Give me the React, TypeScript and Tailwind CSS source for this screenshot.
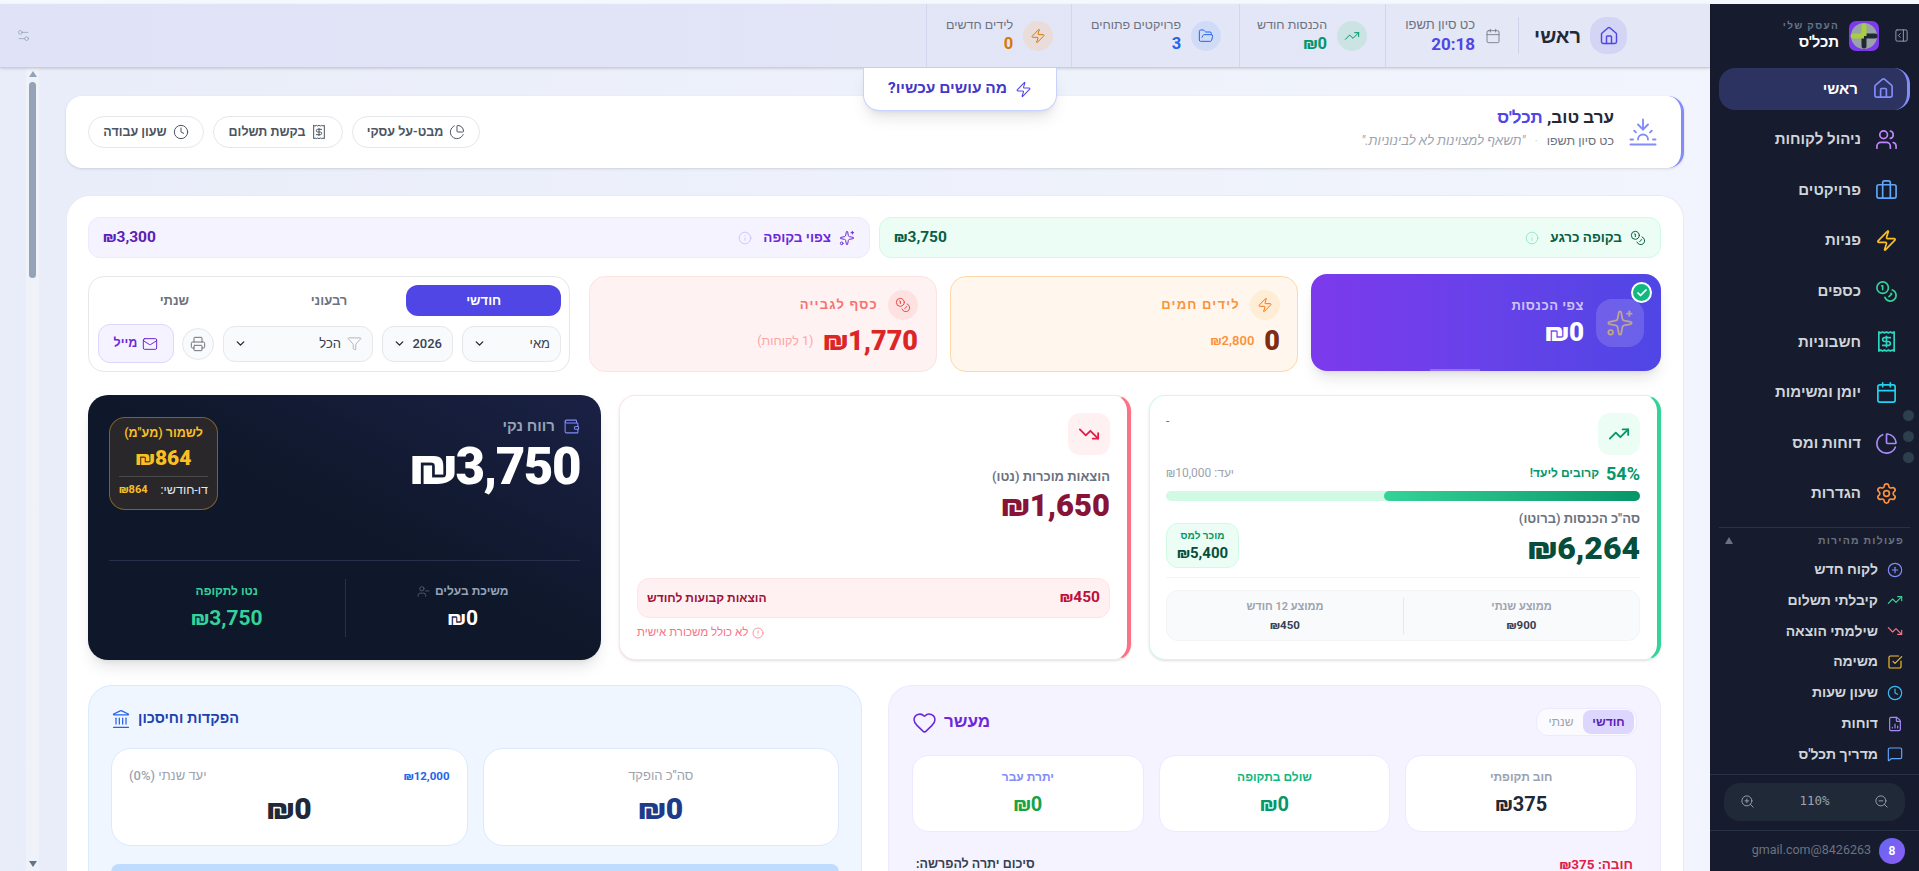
import {
  Briefcase, Calendar, ChartPie, Check, ChevronDown, CircleAlert, CirclePlus, Clock, Coins, FileChartColumn, Filter,
  FolderOpen, Heart, House, Info, Landmark, Mail, MessageSquare, PanelRightOpen, Printer, Receipt, Settings, Settings2,
  Sparkles, SquareCheckBig, Sunset, TrendingDown, TrendingUp, UserMinus, Users, Wallet, Zap, ZoomIn, ZoomOut,
} from "lucide-react";

const navItems = [
  { label: "ראשי", icon: House, color: "text-[#818cf8]", active: true },
  { label: "ניהול לקוחות", icon: Users, color: "text-[#c084fc]" },
  { label: "פרויקטים", icon: Briefcase, color: "text-[#60a5fa]" },
  { label: "פניות", icon: Zap, color: "text-[#fbbf24]" },
  { label: "כספים", icon: Coins, color: "text-[#34d399]" },
  { label: "חשבוניות", icon: Receipt, color: "text-[#2dd4bf]" },
  { label: "יומן ומשימות", icon: Calendar, color: "text-[#22d3ee]" },
  { label: "דוחות ומס", icon: ChartPie, color: "text-[#a78bfa]" },
  { label: "הגדרות", icon: Settings, color: "text-[#fb923c]" },
];

const quickItems = [
  { label: "לקוח חדש", icon: CirclePlus, color: "text-[#818cf8]" },
  { label: "קיבלתי תשלום", icon: TrendingUp, color: "text-[#34d399]" },
  { label: "שילמתי הוצאה", icon: TrendingDown, color: "text-[#fb7185]" },
  { label: "משימה", icon: SquareCheckBig, color: "text-[#fbbf24]" },
  { label: "שעון שעות", icon: Clock, color: "text-[#38bdf8]" },
  { label: "דוחות", icon: FileChartColumn, color: "text-[#a78bfa]" },
  { label: "מדריך תכל'ס", icon: MessageSquare, color: "text-[#60a5fa]" },
];

function Logo() {
  return (
    <svg width="30" height="30" viewBox="0 0 30 30" aria-hidden>
      <rect width="30" height="30" rx="7" fill="#7c3aed" />
      <circle cx="15" cy="15" r="13" fill="#9aa3a8" />
      <path d="M15 12.5h11a2.5 2.5 0 0 1 0 5H15z" fill="#1f2a30" />
      <path d="M12.5 15h5v10a2.5 2.5 0 0 1-5 0z" fill="#1f2a30" />
      <path d="M15 17.5H4a2.5 2.5 0 0 1 0-5h11z" fill="#a9cf3c" />
      <path d="M17.5 15h-5V5a2.5 2.5 0 0 1 5 0z" fill="#a9cf3c" />
    </svg>
  );
}

function Sidebar() {
  return (
    <aside className="relative flex w-[209px] shrink-0 flex-col bg-[#161c2d]">
      <div className="flex h-[65px] items-center pr-[10px] pl-[12px]">
        <PanelRightOpen size={15} strokeWidth={1.5} className="ml-[15px] text-[#94a3b8]" />
        <Logo />
        <div className="mr-[10px] leading-none">
          <div className="text-[10px] font-semibold tracking-[1.3px] text-[#64748b]">העסק שלי</div>
          <div className="mt-[4px] text-[15px] font-extrabold text-white">תכל'ס</div>
        </div>
      </div>
      <nav className="flex flex-col gap-[8.6px] px-[9px]">
        {navItems.map((n) => (
          <div
            key={n.label}
            className={`flex h-[42px] items-center gap-[14px] rounded-2xl pr-[12px] text-[15px] ${
              n.active
                ? "border-r-[3px] border-[#818cf8] bg-[#2d3360] pr-[10px] font-bold text-white"
                : "font-semibold text-[#d1d5db]"
            }`}
          >
            <n.icon size={23} strokeWidth={1.75} className={n.color} />
            <span>{n.label}</span>
          </div>
        ))}
      </nav>
      <div className="mx-[9px] mt-[12px] border-t border-[#2a3345]" />
      <div className="flex h-[27px] items-center justify-between px-[15px] text-[10.5px] font-bold tracking-[1.2px] text-[#6b7280]">
        <span>פעולות מהירות</span>
        <span className="h-0 w-0 border-r-[4.5px] border-b-[7px] border-l-[4.5px] border-r-transparent border-b-[#6b7280] border-l-transparent" />
      </div>
      <div className="flex flex-col">
        {quickItems.map((q) => (
          <div key={q.label} className="flex h-[30.8px] items-center gap-[9px] pr-[16px] text-[14px] font-semibold text-[#d1d5db]">
            <q.icon size={16} strokeWidth={1.75} className={q.color} />
            <span>{q.label}</span>
          </div>
        ))}
      </div>
      <div className="mt-[4px] border-t border-[#2a3345] px-[14px] pt-[8px] pb-[9px]">
        <div className="flex h-[38px] items-center justify-between rounded-2xl bg-[#1f2937] px-[16px] text-[#9ca3af]">
          <ZoomOut size={15} strokeWidth={1.5} />
          <span className="font-['DejaVu_Sans_Mono',monospace] text-[12.5px]">110%</span>
          <ZoomIn size={15} strokeWidth={1.5} />
        </div>
      </div>
      <div className="flex h-[42px] items-center gap-[8px] border-t border-[#2a3345] pr-[14px]">
        <span className="flex size-[26px] items-center justify-center rounded-full bg-gradient-to-br from-[#6366f1] to-[#8b5cf6] text-[12px] font-bold text-white">
          8
        </span>
        <span className="text-[12.5px] text-[#6b7280]">8426263@gmail.com</span>
      </div>
      <div className="absolute top-[406px] left-[193px] flex flex-col gap-[10px]">
        <span className="size-[11px] rounded-full bg-[#2d3f4d]" />
        <span className="size-[11px] rounded-full bg-[#2d3f4d]" />
        <span className="size-[11px] rounded-full bg-[#2d3f4d]" />
      </div>
    </aside>
  );
}

function HeaderStat({ label, value, icon: Icon, circle, color, width }: { label: string; value: string; icon: typeof Zap; circle: string; color: string; width: string }) {
  return (
    <div className={`flex h-full items-center gap-[10px] border-l border-[#d3d7ee] pr-[18px] ${width}`}>
      <span className={`flex size-[30px] items-center justify-center rounded-full ${circle}`}>
        <Icon size={16} strokeWidth={1.5} className={color} />
      </span>
      <div>
        <div className="text-[12.5px] leading-[16px] text-[#6b7280]">{label}</div>
        <div className={`text-[16.5px] leading-[22px] font-bold ${color}`}>{value}</div>
      </div>
    </div>
  );
}

function Header() {
  return (
    <header className="relative z-10 flex h-[64px] shrink-0 items-center border-b border-[#c9cdea] bg-gradient-to-l from-[#e4e8f6] to-[#e0e2f7] pr-[83px] shadow-sm">
      <span className="flex size-[37px] items-center justify-center rounded-2xl bg-[#d4d5f5]">
        <House size={20} strokeWidth={1.75} className="text-[#4f46e5]" />
      </span>
      <span className="mr-[9px] text-[20px] font-bold text-[#1f2937]">ראשי</span>
      <span className="mr-[15px] h-[37px] border-r border-[#cfd3ea]" />
      <div className="flex h-full w-[133px] items-center gap-[10px] border-l border-[#d3d7ee] pr-[17px]">
        <Calendar size={16} strokeWidth={1.25} className="text-[#6b7280]" />
        <div>
          <div className="text-[13px] leading-[16px] text-[#6b7280]">כט סיון תשפו</div>
          <div className="text-[17px] leading-[22px] font-bold text-[#4f46e5]">20:18</div>
        </div>
      </div>
      <HeaderStat label="הכנסות חודש" value="₪0" icon={TrendingUp} circle="bg-[#cce3e4]" color="text-[#059669]" width="w-[146px]" />
      <HeaderStat label="פרויקטים פתוחים" value="3" icon={FolderOpen} circle="bg-[#d0dcf7]" color="text-[#2563eb]" width="w-[168px]" />
      <HeaderStat label="לידים חדשים" value="0" icon={Zap} circle="bg-[#e9dcd9]" color="text-[#d97706]" width="w-[145px]" />
      <Settings2 size={15} strokeWidth={1.25} className="mr-auto ml-[16px] text-[#94a3b8]" />
      <button className="absolute top-[64px] left-[863px] flex h-[43px] w-[194px] items-center justify-center gap-[8px] rounded-b-2xl border border-t-0 border-[#c7d2fe] bg-white text-[15.5px] font-bold text-[#4338ca] shadow-lg">
        <Zap size={17} strokeWidth={1.5} className="text-[#4f46e5]" />
        מה עושים עכשיו?
      </button>
    </header>
  );
}

function Scrollbar() {
  return (
    <div className="ml-[26px] flex w-[13px] shrink-0 flex-col items-center self-stretch bg-[#f1f5f9]/70 pt-[3px]">
      <span className="h-0 w-0 border-r-[4px] border-b-[6px] border-l-[4px] border-r-transparent border-b-[#94a3b8] border-l-transparent" />
      <span className="mt-[5px] h-[196px] w-[7px] rounded-full bg-[#94a3b8]" />
      <span className="mt-auto mb-[4px] h-0 w-0 border-t-[6px] border-r-[4px] border-l-[4px] border-t-[#64748b] border-r-transparent border-l-transparent" />
    </div>
  );
}

function GreetingCard() {
  const buttons = [
    { label: "מבט-על עסקי", icon: ChartPie, w: "w-[128px]" },
    { label: "בקשת תשלום", icon: Receipt, w: "w-[130px]" },
    { label: "שעון עבודה", icon: Clock, w: "w-[116px]" },
  ];
  return (
    <section className="flex h-[72px] shrink-0 items-center justify-between rounded-2xl border-r-[3px] border-[#818cf8] bg-white pr-[23px] pl-[22px] shadow-sm">
      <div className="flex items-center gap-[14px]">
        <Sunset size={30} strokeWidth={1.5} className="text-[#818cf8]" />
        <div className="mb-[9px]">
          <div className="text-[17px] leading-[24px] font-extrabold text-[#1f2937]">
            ערב טוב, <span className="text-[#4f46e5]">תכל'ס</span>
          </div>
          <div className="mt-[3px] flex items-center gap-[9px] text-[12.5px] leading-[18px] text-[#6b7280]">
            <span>כט סיון תשפו</span>
            <span className="text-[#d1d5db]">·</span>
            <span className="text-[13px] text-[#9ca3af] italic">"תשאף למצוינות לא לבינוניות."</span>
          </div>
        </div>
      </div>
      <div className="flex gap-[9px]">
        {buttons.map((b) => (
          <button key={b.label} className={`flex h-[32px] items-center justify-center gap-[6px] rounded-full border border-[#e5e7eb] text-[12.5px] font-semibold text-[#4b5563] ${b.w}`}>
            <b.icon size={16} strokeWidth={1.5} />
            {b.label}
          </button>
        ))}
      </div>
    </section>
  );
}

function CashPills() {
  return (
    <div className="grid h-[41px] grid-cols-2 gap-[9px]">
      <div className="flex items-center justify-between rounded-xl border border-[#d1fae5] bg-[#ecfdf5] px-[14px]">
        <div className="flex items-center gap-[8px] text-[13.5px] font-bold text-[#065f46]">
          <Coins size={16} strokeWidth={1.5} />
          <span>בקופה כרגע</span>
          <Info size={14} strokeWidth={1.25} className="mr-[3px] text-[#6ee7b7]" />
        </div>
        <span className="text-[15.5px] font-bold text-[#065f46]">₪3,750</span>
      </div>
      <div className="flex items-center justify-between rounded-xl border border-[#ede9fe] bg-[#f5f3ff] px-[14px]">
        <div className="flex items-center gap-[8px] text-[13.5px] font-bold text-[#6d28d9]">
          <Sparkles size={16} strokeWidth={1.5} />
          <span>צפוי בקופה</span>
          <Info size={14} strokeWidth={1.25} className="mr-[3px] text-[#c4b5fd]" />
        </div>
        <span className="text-[15.5px] font-bold text-[#5b21b6]">₪3,300</span>
      </div>
    </div>
  );
}

function SelectBox({ className, children }: { className: string; children: React.ReactNode }) {
  return (
    <div className={`flex h-[36px] items-center justify-between rounded-xl border border-[#e5e7eb] bg-[#f9fafb] px-[10px] text-[13px] font-medium text-[#374151] ${className}`}>
      {children}
      <ChevronDown size={13} strokeWidth={2.5} className="text-[#1f2937]" />
    </div>
  );
}

function KpiRow() {
  return (
    <div className="mt-[16px] flex h-[98px] items-end gap-[13px]">
      <div className="relative flex h-[97px] w-[350px] shrink-0 items-center gap-[12px] self-start rounded-2xl bg-gradient-to-l from-[#4f46e5] to-[#7c3aed] pr-[17px] shadow-lg">
        <span className="absolute top-[8px] right-[9px] z-10 flex size-[21px] items-center justify-center rounded-full border-2 border-white bg-[#10b981]">
          <Check size={12} strokeWidth={3.5} className="text-white" />
        </span>
        <span className="flex size-[48px] items-center justify-center rounded-2xl bg-white/15">
          <Sparkles size={28} strokeWidth={1.5} className="text-[#bfa58f]" />
        </span>
        <div>
          <div className="text-[13px] font-bold tracking-[0.5px] text-white/70">צפי הכנסות</div>
          <div className="text-[26px] leading-[34px] font-black text-white">₪0</div>
        </div>
        <span className="absolute right-[181px] bottom-0 h-[2px] w-[50px] bg-white/25" />
      </div>
      <div className="flex h-[96px] w-[348px] shrink-0 flex-col rounded-2xl border border-[#fed7aa] bg-[#fff7ed] pt-[13px] pr-[17px]">
        <div className="flex items-center gap-[10px]">
          <span className="flex size-[30px] items-center justify-center rounded-full bg-[#ffedd5]">
            <Zap size={16} strokeWidth={1.5} className="text-[#f97316]" />
          </span>
          <span className="text-[13px] font-bold tracking-[1.2px] text-[#fb923c]">לידים חמים</span>
        </div>
        <div className="mt-[4px] flex items-center gap-[10px]">
          <span className="text-[27px] leading-[34px] font-black text-[#7c2d12]">0</span>
          <span className="text-[13px] font-semibold text-[#fb923c]">₪2,800</span>
        </div>
      </div>
      <div className="flex h-[96px] w-[348px] shrink-0 flex-col rounded-2xl border border-[#fee2e2] bg-[#fef2f2] pt-[13px] pr-[18px]">
        <div className="flex items-center gap-[10px]">
          <span className="flex size-[30px] items-center justify-center rounded-full bg-[#fee2e2]">
            <Coins size={16} strokeWidth={1.5} className="text-[#ef4444]" />
          </span>
          <span className="text-[13px] font-bold tracking-[1.2px] text-[#f87171]">כסף לגבייה</span>
        </div>
        <div className="mt-[4px] flex items-center gap-[10px]">
          <span className="text-[27px] leading-[34px] font-black text-[#dc2626]">₪1,770</span>
          <span className="text-[12.5px] text-[#fca5a5]">(1 לקוחות)</span>
        </div>
      </div>
      <div className="mr-[6px] flex h-[96px] w-[482px] shrink-0 flex-col rounded-2xl border border-[#e5e7eb] bg-white px-[8px] pt-[8px]">
        <div className="grid h-[31px] grid-cols-3 text-[13px] font-semibold text-[#6b7280]">
          <span className="flex items-center justify-center rounded-xl bg-[#4f46e5] font-bold text-white">חודשי</span>
          <span className="flex items-center justify-center">רבעוני</span>
          <span className="flex items-center justify-center">שנתי</span>
        </div>
        <div className="mt-[8px] flex items-center gap-[9px]">
          <SelectBox className="w-[99px]">מאי</SelectBox>
          <SelectBox className="w-[71px]">2026</SelectBox>
          <SelectBox className="w-[150px]">
            <span className="flex items-center gap-[6px]">
              <Filter size={15} strokeWidth={1.25} className="text-[#9ca3af]" />
              הכל
            </span>
          </SelectBox>
          <span className="flex h-[32px] w-[32px] items-center justify-center rounded-full border border-[#e5e7eb] bg-[#f9fafb]">
            <Printer size={16} strokeWidth={1.5} className="text-[#6b7280]" />
          </span>
          <span className="mr-[-1px] flex h-[39px] w-[76px] items-center justify-center gap-[5px] rounded-xl border border-[#ddd6fe] bg-[#f5f3ff] text-[12.5px] font-bold text-[#6d28d9]">
            <Mail size={16} strokeWidth={1.5} />
            מייל
          </span>
        </div>
      </div>
    </div>
  );
}

function IncomeCard() {
  return (
    <div className="flex h-[265px] w-[512px] shrink-0 flex-col rounded-2xl border border-r-4 border-[#d1fae5] border-r-[#34d399] bg-white pt-[17px] pr-[17px] pl-[16px] shadow-sm">
      <div className="flex items-start justify-between">
        <span className="flex size-[42px] items-center justify-center rounded-xl bg-[#ecfdf5]">
          <TrendingUp size={22} strokeWidth={2} className="text-[#059669]" />
        </span>
        <span className="text-[12px] leading-[16px] text-[#6b7280]">-</span>
      </div>
      <div className="mt-[5px] flex h-[26px] items-center justify-between">
        <div className="flex items-center gap-[7px]">
          <span className="text-[18px] font-bold text-[#059669]">54%</span>
          <span className="text-[12px] font-semibold text-[#059669]">קרובים ליעד!</span>
        </div>
        <span className="text-[12px] text-[#9ca3af]">יעד: ₪10,000</span>
      </div>
      <div className="mt-[5px] flex h-[10px] justify-start rounded-full bg-[#d1fae5]">
        <div className="h-full w-[54%] rounded-full bg-gradient-to-r from-[#34d399] to-[#059669]" />
      </div>
      <div className="mt-[9px] flex items-start justify-between">
        <div>
          <div className="text-[13px] leading-[18px] font-semibold text-[#6b7280]">סה"כ הכנסות (ברוטו)</div>
          <div className="mt-[1px] text-[32px] leading-[38px] font-black text-[#064e3b]">₪6,264</div>
        </div>
        <div className="mt-[13px] flex h-[45px] w-[73px] flex-col items-center justify-center rounded-xl border border-[#d1fae5] bg-[#ecfdf5]">
          <span className="text-[10px] leading-[14px] font-semibold text-[#059669]">מוכר למס</span>
          <span className="text-[15px] leading-[20px] font-bold text-[#064e3b]">₪5,400</span>
        </div>
      </div>
      <div className="mt-[9px] border-t border-[#f3f4f6]" />
      <div className="mt-[12px] grid h-[51px] grid-cols-2 rounded-xl border border-[#f3f4f6] bg-[#f9fafb] py-[7px]">
        <div className="flex flex-col items-center justify-center border-l border-[#e5e7eb]">
          <span className="text-[11px] leading-[18px] font-semibold text-[#9ca3af]">ממוצע שנתי</span>
          <span className="text-[11.5px] leading-[18px] font-bold text-[#374151]">₪900</span>
        </div>
        <div className="flex flex-col items-center justify-center">
          <span className="text-[11px] leading-[18px] font-semibold text-[#9ca3af]">ממוצע 12 חודש</span>
          <span className="text-[11.5px] leading-[18px] font-bold text-[#374151]">₪450</span>
        </div>
      </div>
    </div>
  );
}

function ExpenseCard() {
  return (
    <div className="flex h-[265px] w-[512px] shrink-0 flex-col rounded-2xl border border-r-4 border-[#ffe4e6] border-r-[#fb7185] bg-white px-[17px] pt-[17px] shadow-sm">
      <span className="flex size-[42px] items-center justify-center rounded-xl bg-[#fff1f2]">
        <TrendingDown size={22} strokeWidth={2} className="text-[#e11d48]" />
      </span>
      <div className="mt-[13px] text-[13px] leading-[18px] font-semibold text-[#6b7280]">הוצאות מוכרות (נטו)</div>
      <div className="mt-[1px] text-[31px] leading-[38px] font-black text-[#881337]">₪1,650</div>
      <div className="mt-auto flex h-[40px] items-center justify-between rounded-xl border border-[#ffe4e6] bg-[#fff1f2] px-[9px]">
        <span className="text-[15.5px] font-bold text-[#be123c]">₪450</span>
        <span className="text-[12px] font-semibold text-[#9f1239]">הוצאות קבועות לחודש</span>
      </div>
      <div className="mt-[7px] mb-[18px] flex h-[16px] items-center justify-end gap-[4px] text-[11.5px] font-medium text-[#fb7185]">
        <CircleAlert size={12} strokeWidth={1.5} />
        <span>לא כולל משכורת אישית</span>
      </div>
    </div>
  );
}

function ProfitCard() {
  return (
    <div className="flex h-[265px] w-[513px] shrink-0 flex-col rounded-[20px] bg-gradient-to-bl from-[#1a2145] via-[#0f172a] to-[#0f172a] px-[21px] shadow-lg">
      <div className="flex h-[166px] items-start justify-between border-b border-[#26304a]">
        <div className="pt-[21px]">
          <div className="flex items-center gap-[8px] text-[15px] leading-[20px] font-semibold text-[#94a3b8]">
            <Wallet size={17} strokeWidth={1.5} className="text-[#818cf8]" />
            רווח נקי
          </div>
          <div className="mt-[2px] text-[51px] leading-[58px] font-black tracking-[-1.5px] text-white">₪3,750</div>
        </div>
        <div className="mt-[22px] flex h-[93px] w-[109px] flex-col items-center rounded-2xl border border-[#fbbf24]/40 bg-[#29272a] px-[9px] pt-[7px]">
          <div className="text-[12.5px] leading-[16px] font-semibold text-[#fbbf24]">לשמור (מע"מ)</div>
          <div className="mt-[3px] text-[21px] leading-[28px] font-black text-[#fbbf24]">₪864</div>
          <div className="mt-[4px] flex w-full items-center justify-between border-t border-[#4a4a4a] pt-[5px] leading-[16px]">
            <span className="text-[12.5px] text-[#e5e7eb]">דו-חודשי:</span>
            <span className="text-[11px] font-bold text-[#fbbf24]">₪864</span>
          </div>
        </div>
      </div>
      <div className="mt-[18px] grid h-[58px] grid-cols-2">
        <div className="flex flex-col items-center border-l border-[#26304a]">
          <div className="flex items-center gap-[5px] text-[12px] leading-[24px] font-semibold text-[#94a3b8]">
            <span>משיכת בעלים</span>
            <UserMinus size={13} strokeWidth={1.25} className="text-[#6b7280]" />
          </div>
          <div className="text-[21px] leading-[30px] font-bold text-white">₪0</div>
        </div>
        <div className="flex flex-col items-center">
          <div className="text-[12px] leading-[24px] font-semibold text-[#34d399]">נטו לתקופה</div>
          <div className="text-[21px] leading-[30px] font-bold text-[#34d399]">₪3,750</div>
        </div>
      </div>
    </div>
  );
}

function TitheStat({ label, value, labelColor, valueColor }: { label: string; value: string; labelColor: string; valueColor: string }) {
  return (
    <div className="flex h-[77px] flex-col items-center justify-center gap-[5px] rounded-2xl border border-[#ede9fe] bg-white pb-[3px]">
      <span className={`text-[12px] leading-[18px] font-semibold ${labelColor}`}>{label}</span>
      <span className={`text-[20px] leading-[26px] font-bold ${valueColor}`}>{value}</span>
    </div>
  );
}

function TitheCard() {
  return (
    <div className="w-[773px] shrink-0 rounded-t-3xl border border-b-0 border-[#ede9fe] bg-[#f5f3ff] px-[23px] pt-[22px]">
      <div className="flex h-[28px] items-center justify-between">
        <div className="flex h-[28px] w-[101px] items-center rounded-xl border border-[#ede9fe] bg-white/60 px-[2px] text-[12px]">
          <span className="flex h-[24px] w-[51px] items-center justify-center rounded-lg bg-[#ddd6fe] font-bold text-[#5b21b6]">חודשי</span>
          <span className="flex-1 text-center text-[#9ca3af]">שנתי</span>
        </div>
        <div className="flex items-center gap-[7px] text-[17px] font-bold text-[#6d28d9]">
          <span>מעשר</span>
          <Heart size={25} strokeWidth={1.5} />
        </div>
      </div>
      <div className="mt-[19px] grid grid-cols-3 gap-[15px]">
        <TitheStat label="חוב תקופתי" value="₪375" labelColor="text-[#9ca3af]" valueColor="text-[#1f2937]" />
        <TitheStat label="שולם בתקופה" value="₪0" labelColor="text-[#10b981]" valueColor="text-[#059669]" />
        <TitheStat label="יתרת עבר" value="₪0" labelColor="text-[#818cf8]" valueColor="text-[#16a34a]" />
      </div>
      <div className="mt-[22px] flex items-center justify-between px-[4px]">
        <span className="text-[13.5px] font-bold text-[#e11d48]">חובה: ₪375</span>
        <span className="text-[12.5px] font-bold text-[#374151]">סיכום יתרה להפרשה:</span>
      </div>
    </div>
  );
}

function DepositStat({ children }: { children: React.ReactNode }) {
  return <div className="flex h-[98px] flex-col items-center rounded-[20px] border border-[#dbeafe] bg-white px-[17px] pt-[18px]">{children}</div>;
}

function DepositsCard() {
  return (
    <div className="w-[774px] shrink-0 rounded-t-3xl border border-b-0 border-[#dbeafe] bg-[#eff6ff] px-[22px] pt-[22px]">
      <div className="flex h-[21px] items-center justify-end gap-[7px] text-[14.5px] font-bold text-[#1e40af]">
        <span>הפקדות וחיסכון</span>
        <Landmark size={20} strokeWidth={1.5} className="text-[#2563eb]" />
      </div>
      <div className="mt-[19px] grid grid-cols-2 gap-[15px]">
        <DepositStat>
          <span className="text-[13px] leading-[18px] font-medium text-[#9ca3af]">סה"כ הופקד</span>
          <span className="mt-[5px] text-[30px] leading-[38px] font-black text-[#1e3a8a]">₪0</span>
        </DepositStat>
        <DepositStat>
          <div className="flex w-full items-center justify-between">
            <span className="text-[11.5px] leading-[18px] font-bold text-[#2563eb]">₪12,000</span>
            <span className="text-[13px] leading-[18px] font-medium text-[#9ca3af]">יעד שנתי (0%)</span>
          </div>
          <span className="mt-[5px] text-[30px] leading-[38px] font-black text-[#1f2937]">₪0</span>
        </DepositStat>
      </div>
      <div className="mt-[18px] h-[12px] rounded-t-lg bg-[#bfdbfe]" />
    </div>
  );
}

export default function App() {
  return (
    <div dir="rtl" className="flex h-screen overflow-hidden bg-[#f5f8fd] pt-[4px] font-[Roboto,'Noto_Sans',sans-serif]">
      <Sidebar />
      <div className="flex min-w-0 flex-1 flex-col">
        <Header />
        <div className="flex min-h-0 flex-1 flex-row-reverse overflow-hidden bg-gradient-to-l from-[#f2f5fd] to-[#e9edf9]">
          <Scrollbar />
          <main className="flex min-w-0 flex-1 flex-col pt-[28px] pr-[26px] pl-[27px]">
            <GreetingCard />
            <section className="mt-[27px] flex-1 rounded-t-3xl border border-b-0 border-[#e8ebf5] bg-white pt-[21px] pr-[22px] pl-[21px]">
              <CashPills />
              <KpiRow />
              <div className="mt-[23px] flex gap-[18px]">
                <IncomeCard />
                <ExpenseCard />
                <ProfitCard />
              </div>
              <div className="mt-[25px] flex gap-[26px]">
                <TitheCard />
                <DepositsCard />
              </div>
            </section>
          </main>
        </div>
      </div>
    </div>
  );
}
